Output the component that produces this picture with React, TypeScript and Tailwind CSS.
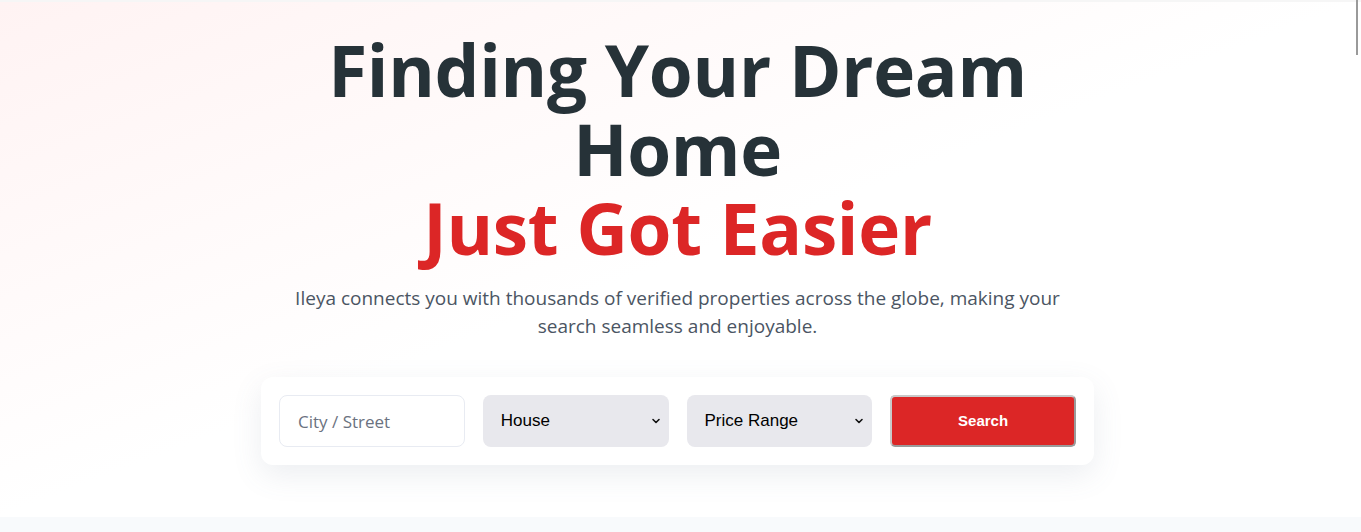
import React from "react";

export default function App() {
  return (
    <div className="relative min-h-[532px] w-full bg-[#f8fafc]">
      <section className="w-full bg-gradient-to-br from-[#fff3f3] via-white to-white border-t-2 border-[#f6f6f6] pb-[52px]">
        <div className="mx-auto flex w-full flex-col items-center pr-[6px] pt-[28px]">
          <h1
            className="text-center text-[71px] font-bold leading-[79px] tracking-[-0.3px] text-[#263238]"
            style={{ fontFamily: '"Open Sans", sans-serif' }}
          >
            <span className="block">Finding Your Dream</span>
            <span className="block">Home</span>
            <span className="block text-[#dc2626]">Just Got Easier</span>
          </h1>
          <p
            className="mt-[17px] max-w-[800px] text-center text-[19px] leading-[28px] text-[#4b5563]"
            style={{ fontFamily: '"Open Sans", sans-serif' }}
          >
            Ileya connects you with thousands of verified properties across the globe, making your
            <br />
            search seamless and enjoyable.
          </p>
          <div className="mt-[37px] grid w-[833px] grid-cols-4 gap-[18px] rounded-[12px] bg-white p-[18px] shadow-[0_10px_30px_rgba(100,116,139,0.12)]">
            <input
              type="text"
              placeholder="City / Street"
              className="h-[52px] rounded-[8px] border border-[#e8ebf2] bg-white px-[18px] text-[17px] text-[#374151] placeholder:text-[#6b7280] outline-none"
              style={{ fontFamily: '"Open Sans", sans-serif' }}
            />
            <div className="relative h-[52px] rounded-[8px] bg-[#e8e8ed]">
              <div
                className="flex h-full items-center justify-between pl-[18px] pr-[8px] text-[17px] text-black"
                style={{ fontFamily: '"Liberation Sans", Arial, sans-serif' }}
              >
                <span>House</span>
                <svg width="10" height="10" viewBox="0 0 10 10" fill="none">
                  <path d="M2 3.5 L5 6.5 L8 3.5" stroke="#111" strokeWidth="1.6" strokeLinecap="round" strokeLinejoin="round" />
                </svg>
              </div>
            </div>
            <div className="relative h-[52px] rounded-[8px] bg-[#e8e8ed]">
              <div
                className="flex h-full items-center justify-between pl-[18px] pr-[8px] text-[17px] text-black"
                style={{ fontFamily: '"Liberation Sans", Arial, sans-serif' }}
              >
                <span>Price Range</span>
                <svg width="10" height="10" viewBox="0 0 10 10" fill="none">
                  <path d="M2 3.5 L5 6.5 L8 3.5" stroke="#111" strokeWidth="1.6" strokeLinecap="round" strokeLinejoin="round" />
                </svg>
              </div>
            </div>
            <button
              className="h-[52px] rounded-[5px] border-2 border-t-[#c9c9c9] border-l-[#c9c9c9] border-b-[#9a9a9a] border-r-[#9a9a9a] bg-[#dc2626] text-[15px] font-bold text-white"
              style={{ fontFamily: '"Liberation Sans", Arial, sans-serif' }}
            >
              Search
            </button>
          </div>
        </div>
      </section>
      <div className="absolute right-[3px] top-0 h-[55px] w-[2px] bg-[#9a9a9a]" />
    </div>
  );
}
